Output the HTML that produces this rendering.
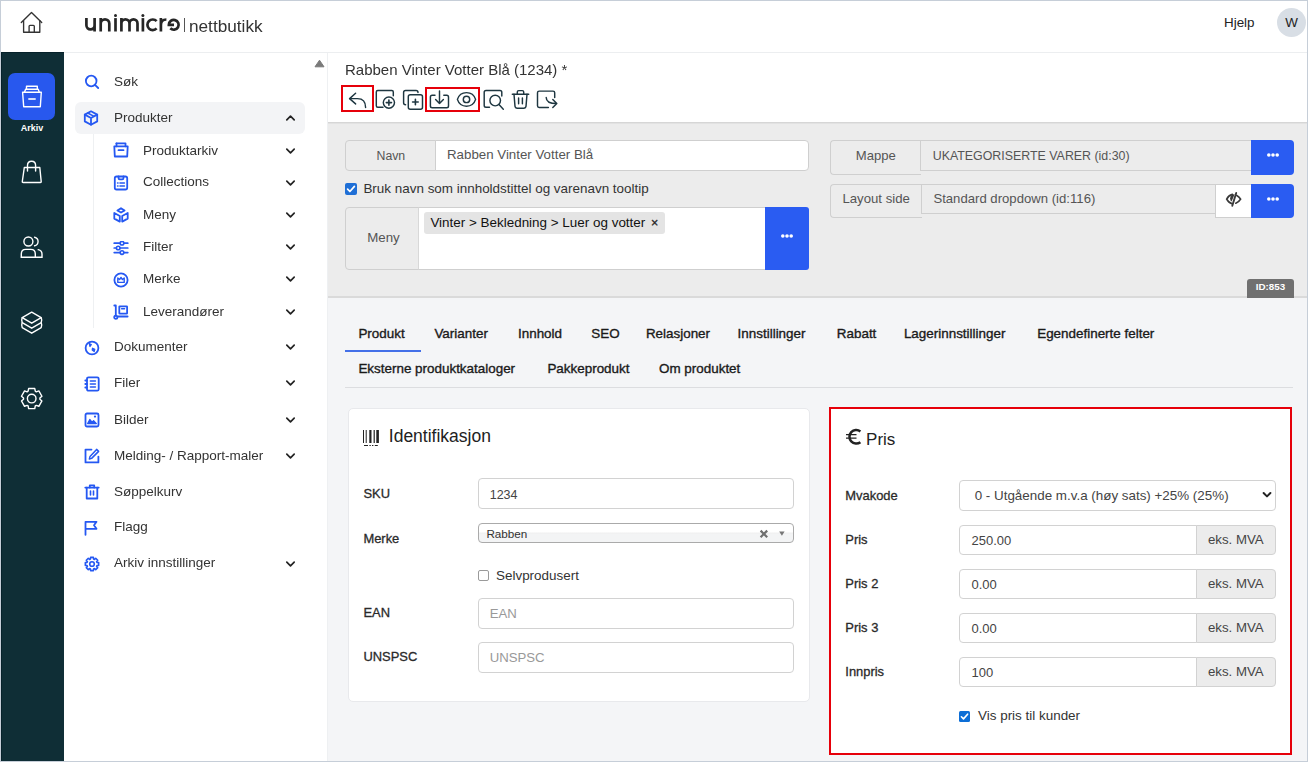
<!DOCTYPE html>
<html><head><meta charset="utf-8">
<style>
*{box-sizing:border-box;margin:0;padding:0}
html,body{width:1308px;height:762px;overflow:hidden;background:#fff}
body{font-family:"Liberation Sans",sans-serif;position:relative;color:#333}
.a{position:absolute}
#frame{position:absolute;left:0;top:0;width:1308px;height:762px;border:1px solid #c6ced8;pointer-events:none;z-index:50}
#hdr{left:1px;top:1px;width:1306px;height:52px;background:#fff;border-bottom:1px solid #eceef0}
#side{left:1px;top:52px;width:63px;height:709px;background:#0f2e36;border-top:1px solid #06212a;border-left:1px solid #06212a}
#nav{left:64px;top:53px;width:264px;height:708px;background:#fff;border-right:1px solid #eef0f2}
#main{left:328px;top:53px;width:979px;height:708px;background:#f4f5f7}
#tb{left:0;top:0;width:979px;height:69px;background:#fff}
#band{left:0;top:70px;width:979px;height:175px;background:#ededed;border-top:1px solid #dedede;border-bottom:1px solid #dcdcdc}
.nv{position:absolute;left:0;width:250px;font-size:13.3px;color:#333}
.nv .t{position:absolute;white-space:nowrap}
.chev{position:absolute;left:222px;width:9px;height:9px}
svg{display:block}
.nt{font-size:13.5px;line-height:16px;color:#333;will-change:transform;white-space:nowrap}
</style></head><body>
<div id="frame"></div>

<!-- header -->
<div id="hdr" class="a">
</div>
<svg class="a" style="left:20px;top:11px" width="24" height="24" viewBox="0 0 24 24" fill="none" stroke="#333" stroke-width="1.35" stroke-linejoin="round" stroke-linecap="round">
  <path d="M1.3 11.6 L11.5 1.4 L21.7 11.6"/>
  <path d="M3.6 9.6 V21.2 H19.8 V9.6"/>
  <path d="M9.1 21.2 V15.2 Q9.1 14.3 10 14.3 H13.4 Q14.3 14.3 14.3 15.2 V21.2"/>
</svg>
<svg class="a" style="left:0;top:0" width="200" height="40" viewBox="0 0 200 40" fill="none" stroke="#262626" stroke-width="2.7">
  <path d="M86.4 18.1 V25.3 A4.1 4.1 0 0 0 94.6 25.3 M94.6 18.1 V31.5"/>
  <path d="M100.7 31.5 V18.1 M100.7 23.6 A4.3 4.3 0 0 1 109.3 23.6 V31.5"/>
  <path d="M115.5 18.1 V31.5"/><circle cx="115.5" cy="15.6" r="1.5" fill="#262626" stroke="none"/>
  <path d="M121.4 31.5 V18.1 M121.4 23.4 A4.05 4.05 0 0 1 129.5 23.4 V31.5 M129.5 23.4 A4 4 0 0 1 137.5 23.4 V31.5"/>
  <path d="M142.9 18.1 V31.5"/><circle cx="142.9" cy="15.6" r="1.5" fill="#262626" stroke="none"/>
  <path d="M156.6 21.2 A5.3 5.3 0 1 0 156.6 28.4"/>
  <path d="M160.9 31.5 V18.1 M160.9 25 Q160.9 19.5 166.4 19.5"/>
  <path d="M174 24.8 H168.85 A4.9 4.9 0 1 1 170.3 28.3"/>
</svg>
<div class="a" style="left:184px;top:18px;width:1px;height:14px;background:#555"></div>
<div class="a" style="left:189px;top:13px;font-size:17.2px;line-height:26px;color:#333;will-change:transform">nettbutikk</div>
<div class="a" style="left:1224px;top:15px;font-size:13.4px;line-height:16px;color:#222">Hjelp</div>
<div class="a" style="left:1277px;top:8px;width:29px;height:29px;border-radius:50%;background:#d8dee5;text-align:center;font-size:13.4px;line-height:29px;color:#222">W</div>

<!-- dark sidebar -->
<div id="side" class="a">
</div>
<div class="a" style="left:8px;top:73px;width:47px;height:47px;border-radius:7px;background:#2858ee"></div>
<svg class="a" style="left:20px;top:84px" width="24" height="24" viewBox="0 0 24 24" fill="none" stroke="#fff" stroke-width="1.4" stroke-linejoin="round">
  <path d="M6.5 5.3 V2.3 H17.3 V5.3"/>
  <path d="M4.5 8.2 L5.6 5.3 H18.2 L19.3 8.2"/>
  <path d="M2.6 8.2 H21.3 L20.3 22.8 H3.7 Z"/>
  <path d="M8.3 15 H15.7" stroke-width="1.6"/>
</svg>
<div class="a" style="left:19px;top:122px;width:26px;text-align:center;font-size:9px;font-weight:bold;line-height:12px;color:#fff">Arkiv</div>
<svg class="a" style="left:20px;top:158px" width="24" height="26" viewBox="0 0 24 26" fill="none" stroke="#fff" stroke-width="1.4" stroke-linejoin="round" stroke-linecap="round">
  <path d="M4.3 9.5 H19.8 L21.2 23.5 Q21.3 24.5 20.3 24.5 H3.2 Q2.2 24.5 2.3 23.5 Z"/>
  <path d="M7.5 13 V7.5 Q7.5 3.2 11.6 3.2 Q15.6 3.2 15.6 7.5 V13"/>
</svg>
<svg class="a" style="left:20px;top:234px" width="24" height="26" viewBox="0 0 24 26" fill="none" stroke="#fff" stroke-width="1.4" stroke-linecap="round">
  <circle cx="8.4" cy="7.5" r="4.5"/>
  <path d="M14.6 3.2 A4.4 4.4 0 0 1 14.6 11.8"/>
  <path d="M1.3 23.2 V20 Q1.3 15.4 5.8 15.4 H10.8 Q15.3 15.4 15.3 20 V23.2 H22 V20 Q22 16.6 18.2 15.6"/>
  <path d="M1.3 23.2 H15.3"/>
</svg>
<svg class="a" style="left:20px;top:310px" width="24" height="26" viewBox="0 0 24 26" fill="none" stroke="#fff" stroke-width="1.4" stroke-linejoin="round">
  <path d="M2.2 7.6 L11.7 2.2 L21.2 7.6 L11.7 13.2 Z"/>
  <path d="M2.2 7.6 Q1.2 10.2 2.2 12.6 L11.7 18.2 L21.2 12.6 Q22.2 10.2 21.2 7.6"/>
  <path d="M2.2 12.6 Q1.2 15.2 2.2 17.6 L11.7 23.2 L21.2 17.6 Q22.2 15.2 21.2 12.6"/>
</svg>
<svg class="a" style="left:20px;top:387px" width="24" height="24" viewBox="0 0 24 24" fill="none" stroke="#fff" stroke-width="1.4" stroke-linejoin="round">
  <path d="M8.11 4.23 L8.63 1.56 L14.77 1.56 L15.29 4.23 L16.29 4.80 L18.86 3.92 L21.93 9.24 L19.88 11.03 L19.88 12.17 L21.93 13.96 L18.86 19.28 L16.29 18.40 L15.29 18.97 L14.77 21.64 L8.63 21.64 L8.11 18.97 L7.11 18.40 L4.54 19.28 L1.47 13.96 L3.52 12.17 L3.52 11.03 L1.47 9.24 L4.54 3.92 L7.11 4.80 Z"/>
  <circle cx="11.7" cy="11.6" r="4.3"/>
</svg>

<!-- nav -->
<div id="nav" class="a">
</div>
<div class="a" style="left:75px;top:102px;width:230px;height:32px;border-radius:6px;background:#f3f4f6"></div>
<div class="a" style="left:93px;top:134px;width:1px;height:194px;background:#eef0f2"></div>
<svg class="a" style="left:314px;top:59px" width="11" height="9" viewBox="0 0 11 9"><path d="M1 7.8 L5.5 1.2 L10 7.8 Z" fill="#7a7a7a" stroke="#7a7a7a" stroke-width="1" stroke-linejoin="round"/></svg>
<svg class="a" style="left:84px;top:74px" width="16" height="16" viewBox="0 0 16 16" fill="none" stroke="#2558f2" stroke-width="1.8" stroke-linecap="round" stroke-linejoin="round"><circle cx="7.2" cy="7" r="5.3"/><path d="M11 10.8 L14.2 14"/></svg>
<div class="a nt" style="left:113.8px;top:74.0px">Søk</div>
<svg class="a" style="left:83px;top:110px" width="16" height="16" viewBox="0 0 16 16" fill="none" stroke="#2558f2" stroke-width="1.8" stroke-linecap="round" stroke-linejoin="round"><path d="M8 1.3 L14.2 4.6 V11.4 L8 14.7 L1.8 11.4 V4.6 Z"/><path d="M1.8 4.6 L8 8 L14.2 4.6 M8 8 V14.7"/><path d="M4.8 3 L11 6.3" stroke-width="1.5"/></svg>
<div class="a nt" style="left:113.8px;top:109.7px">Produkter</div>
<svg class="a" style="left:285px;top:114px" width="11" height="8" viewBox="0 0 11 8" fill="none" stroke="#222" stroke-width="1.7" stroke-linecap="round" stroke-linejoin="round"><path d="M1.8 5.8 L5.5 2.2 L9.2 5.8"/></svg>
<svg class="a" style="left:84px;top:340px" width="16" height="16" viewBox="0 0 16 16" fill="none" stroke="#2558f2" stroke-width="1.8" stroke-linecap="round" stroke-linejoin="round"><circle cx="8" cy="8" r="6.4"/><path d="M5.2 3.6 L7.3 4.6 L6 6.5 Z M8.5 8.2 L10.8 9.4 L10.2 11.6 L8.2 10 Z" fill="#2558f2" stroke-width="1.2"/></svg>
<div class="a nt" style="left:113.8px;top:339.0px">Dokumenter</div>
<svg class="a" style="left:285px;top:343px" width="11" height="8" viewBox="0 0 11 8" fill="none" stroke="#222" stroke-width="1.7" stroke-linecap="round" stroke-linejoin="round"><path d="M1.8 2.2 L5.5 5.8 L9.2 2.2"/></svg>
<svg class="a" style="left:84px;top:376px" width="16" height="16" viewBox="0 0 16 16" fill="none" stroke="#2558f2" stroke-width="1.8" stroke-linecap="round" stroke-linejoin="round"><rect x="3" y="1.3" width="11.7" height="13.4" rx="1.5"/><path d="M1.3 4.5 H3 M1.3 8 H3 M1.3 11.5 H3"/><path d="M6.4 5 H11.4 M6.4 8 H11.4 M6.4 11 H11.4" stroke-width="1.6"/></svg>
<div class="a nt" style="left:113.8px;top:375.1px">Filer</div>
<svg class="a" style="left:285px;top:379px" width="11" height="8" viewBox="0 0 11 8" fill="none" stroke="#222" stroke-width="1.7" stroke-linecap="round" stroke-linejoin="round"><path d="M1.8 2.2 L5.5 5.8 L9.2 2.2"/></svg>
<svg class="a" style="left:84px;top:412px" width="16" height="16" viewBox="0 0 16 16" fill="none" stroke="#2558f2" stroke-width="1.8" stroke-linecap="round" stroke-linejoin="round"><rect x="1.5" y="1.5" width="13" height="13" rx="1.5"/><path d="M3.6 11.6 L5.8 7.5 L8 10.2 L9.6 8.6 L12.4 11.6 Z" fill="#2558f2" stroke-width="1.2"/><circle cx="11" cy="4.6" r="1.1" fill="#2558f2" stroke="none"/></svg>
<div class="a nt" style="left:113.8px;top:411.5px">Bilder</div>
<svg class="a" style="left:285px;top:416px" width="11" height="8" viewBox="0 0 11 8" fill="none" stroke="#222" stroke-width="1.7" stroke-linecap="round" stroke-linejoin="round"><path d="M1.8 2.2 L5.5 5.8 L9.2 2.2"/></svg>
<svg class="a" style="left:84px;top:448px" width="16" height="16" viewBox="0 0 16 16" fill="none" stroke="#2558f2" stroke-width="1.8" stroke-linecap="round" stroke-linejoin="round"><path d="M7.5 1.6 H1.5 V14.4 H14.4 V8.6"/><path d="M12.6 1.4 L14.6 3.4 L7.6 10.4 L5.4 11 L6 8.6 Z" stroke-width="1.5"/></svg>
<div class="a nt" style="left:113.8px;top:447.7px">Melding- / Rapport-maler</div>
<svg class="a" style="left:285px;top:452px" width="11" height="8" viewBox="0 0 11 8" fill="none" stroke="#222" stroke-width="1.7" stroke-linecap="round" stroke-linejoin="round"><path d="M1.8 2.2 L5.5 5.8 L9.2 2.2"/></svg>
<svg class="a" style="left:84px;top:484px" width="16" height="16" viewBox="0 0 16 16" fill="none" stroke="#2558f2" stroke-width="1.8" stroke-linecap="round" stroke-linejoin="round"><path d="M1.3 3.6 H14.7"/><path d="M5.8 3.6 V1.3 H10.2 V3.6"/><path d="M2.7 3.6 V14.5 H13.3 V3.6"/><path d="M6.5 7 V11 M9.5 7 V11" stroke-width="1.6"/></svg>
<div class="a nt" style="left:113.8px;top:483.7px">Søppelkurv</div>
<svg class="a" style="left:84px;top:520px" width="16" height="16" viewBox="0 0 16 16" fill="none" stroke="#2558f2" stroke-width="1.8" stroke-linecap="round" stroke-linejoin="round"><path d="M1.5 14.8 V1.8 H12.5 L10 5.3 L12.5 8.8 H1.5"/></svg>
<div class="a nt" style="left:113.8px;top:519.3px">Flagg</div>
<svg class="a" style="left:84px;top:556px" width="16" height="16" viewBox="0 0 16 16" fill="none" stroke="#2558f2" stroke-width="1.8" stroke-linecap="round" stroke-linejoin="round"><path d="M12.96 6.44 L14.65 6.59 L14.65 9.41 L12.96 9.56 L12.61 10.40 L13.70 11.70 L11.70 13.70 L10.40 12.61 L9.56 12.96 L9.41 14.65 L6.59 14.65 L6.44 12.96 L5.60 12.61 L4.30 13.70 L2.30 11.70 L3.39 10.40 L3.04 9.56 L1.35 9.41 L1.35 6.59 L3.04 6.44 L3.39 5.60 L2.30 4.30 L4.30 2.30 L5.60 3.39 L6.44 3.04 L6.59 1.35 L9.41 1.35 L9.56 3.04 L10.40 3.39 L11.70 2.30 L13.70 4.30 L12.61 5.60 Z" stroke-width="1.6"/><circle cx="8" cy="8" r="2.3" stroke-width="1.6"/></svg>
<div class="a nt" style="left:113.8px;top:555.3px">Arkiv innstillinger</div>
<svg class="a" style="left:285px;top:560px" width="11" height="8" viewBox="0 0 11 8" fill="none" stroke="#222" stroke-width="1.7" stroke-linecap="round" stroke-linejoin="round"><path d="M1.8 2.2 L5.5 5.8 L9.2 2.2"/></svg>
<svg class="a" style="left:113px;top:142px" width="16" height="16" viewBox="0 0 16 16" fill="none" stroke="#2558f2" stroke-width="1.8" stroke-linecap="round" stroke-linejoin="round"><path d="M3.5 1.3 H12.5 V4.3"/><path d="M3.5 1.3 V4.3"/><path d="M1.3 4.3 H14.7 L14.2 14.5 H1.8 Z"/><path d="M5.5 8.2 H10.5"/></svg>
<div class="a nt" style="left:142.6px;top:142.5px">Produktarkiv</div>
<svg class="a" style="left:285px;top:147px" width="11" height="8" viewBox="0 0 11 8" fill="none" stroke="#222" stroke-width="1.7" stroke-linecap="round" stroke-linejoin="round"><path d="M1.8 2.2 L5.5 5.8 L9.2 2.2"/></svg>
<svg class="a" style="left:113px;top:175px" width="16" height="16" viewBox="0 0 16 16" fill="none" stroke="#2558f2" stroke-width="1.8" stroke-linecap="round" stroke-linejoin="round"><rect x="1.8" y="1.5" width="12.4" height="13" rx="1.8"/><path d="M5.5 1.5 V3 Q5.5 4.3 6.8 4.3 H9.2 Q10.5 4.3 10.5 3 V1.5"/><path d="M4.6 8 H5 M7 8 H11.4 M4.6 11 H5 M7 11 H11.4" stroke-width="1.6"/></svg>
<div class="a nt" style="left:142.6px;top:174.4px">Collections</div>
<svg class="a" style="left:285px;top:179px" width="11" height="8" viewBox="0 0 11 8" fill="none" stroke="#222" stroke-width="1.7" stroke-linecap="round" stroke-linejoin="round"><path d="M1.8 2.2 L5.5 5.8 L9.2 2.2"/></svg>
<svg class="a" style="left:113px;top:207px" width="16" height="16" viewBox="0 0 16 16" fill="none" stroke="#2558f2" stroke-width="1.8" stroke-linecap="round" stroke-linejoin="round"><path d="M8 1.2 L11.6 3.4 L8 5.6 L4.4 3.4 Z"/><path d="M1.3 6 L6.8 9 V14.6 L1.3 11.6 Z"/><path d="M14.7 6 L9.2 9 V14.6 L14.7 11.6 Z"/></svg>
<div class="a nt" style="left:142.6px;top:206.6px">Meny</div>
<svg class="a" style="left:285px;top:211px" width="11" height="8" viewBox="0 0 11 8" fill="none" stroke="#222" stroke-width="1.7" stroke-linecap="round" stroke-linejoin="round"><path d="M1.8 2.2 L5.5 5.8 L9.2 2.2"/></svg>
<svg class="a" style="left:113px;top:241px" width="16" height="16" viewBox="0 0 16 16" fill="none" stroke="#2558f2" stroke-width="1.8" stroke-linecap="round" stroke-linejoin="round"><path d="M1.2 2.2 H7 M11 2.2 H14.8 M1.2 7 H3.2 M7.2 7 H14.8 M1.2 11.6 H7 M11 11.6 H14.8" stroke-width="1.7"/><circle cx="9" cy="2.2" r="1.8" stroke-width="1.6"/><circle cx="5.2" cy="7" r="1.8" stroke-width="1.6"/><circle cx="9" cy="11.6" r="1.8" stroke-width="1.6"/></svg>
<div class="a nt" style="left:142.6px;top:239.0px">Filter</div>
<svg class="a" style="left:285px;top:243px" width="11" height="8" viewBox="0 0 11 8" fill="none" stroke="#222" stroke-width="1.7" stroke-linecap="round" stroke-linejoin="round"><path d="M1.8 2.2 L5.5 5.8 L9.2 2.2"/></svg>
<svg class="a" style="left:113px;top:272px" width="16" height="16" viewBox="0 0 16 16" fill="none" stroke="#2558f2" stroke-width="1.8" stroke-linecap="round" stroke-linejoin="round"><circle cx="8" cy="8" r="6.6"/><path d="M4.8 10.4 V6 L6.6 7.6 L8 5.4 L9.4 7.6 L11.2 6 V10.4 Z" stroke-width="1.4"/></svg>
<div class="a nt" style="left:142.6px;top:271.2px">Merke</div>
<svg class="a" style="left:285px;top:275px" width="11" height="8" viewBox="0 0 11 8" fill="none" stroke="#222" stroke-width="1.7" stroke-linecap="round" stroke-linejoin="round"><path d="M1.8 2.2 L5.5 5.8 L9.2 2.2"/></svg>
<svg class="a" style="left:113px;top:304px" width="16" height="16" viewBox="0 0 16 16" fill="none" stroke="#2558f2" stroke-width="1.8" stroke-linecap="round" stroke-linejoin="round"><path d="M1.3 1.5 H2.8 V11.8"/><path d="M5 12.5 H14.6"/><circle cx="2.8" cy="13.2" r="1.6"/><rect x="6.3" y="2.3" width="7.8" height="7.4" rx="0.5"/><path d="M8.6 4.8 H11.6" stroke-width="1.4"/></svg>
<div class="a nt" style="left:142.6px;top:303.5px">Leverandører</div>
<svg class="a" style="left:285px;top:308px" width="11" height="8" viewBox="0 0 11 8" fill="none" stroke="#222" stroke-width="1.7" stroke-linecap="round" stroke-linejoin="round"><path d="M1.8 2.2 L5.5 5.8 L9.2 2.2"/></svg>
<!-- /nav -->
<!-- main -->
<div id="main" class="a">
  <div id="tb" class="a"></div>
</div>
<!-- toolbar -->
<div class="a" style="left:345px;top:61px;font-size:15px;line-height:18px;color:#333;white-space:nowrap;will-change:transform">Rabben Vinter Votter Blå (1234) *</div>
<div class="a" style="left:341px;top:85px;width:33px;height:27px;border:2px solid #e6000a"></div>
<div class="a" style="left:425px;top:87px;width:55px;height:25px;border:2px solid #e6000a"></div>
<svg class="a" style="left:346px;top:90px" width="24" height="20" viewBox="346 90 24 20" fill="none" stroke="#1e3640" stroke-width="1.45" stroke-linecap="round" stroke-linejoin="round"><path d="M355.6 93.3 L349.6 98.6 L355.6 103.9"/><path d="M349.6 98.6 H357.5 Q365.6 98.6 365.6 107.5"/></svg>
<svg class="a" style="left:374px;top:88px" width="24" height="24" viewBox="374 88 24 24" fill="none" stroke="#1e3640" stroke-width="1.45" stroke-linecap="round" stroke-linejoin="round"><path d="M383 107.3 H377.8 Q376.3 107.3 376.3 105.8 V92 Q376.3 90.5 377.8 90.5 H391.8 Q393.3 90.5 393.3 92 V95.8"/><circle cx="388.9" cy="102.6" r="5.6"/><path d="M388.9 100 V105.2 M386.3 102.6 H391.5" stroke-width="1.6"/></svg>
<svg class="a" style="left:401px;top:88px" width="24" height="24" viewBox="401 88 24 24" fill="none" stroke="#1e3640" stroke-width="1.45" stroke-linecap="round" stroke-linejoin="round"><path d="M405.6 104.8 Q403.6 104.8 403.6 102.8 V92.5 Q403.6 90.5 405.6 90.5 H416 Q418 90.5 418 92.5"/><rect x="408.3" y="94.7" width="14.2" height="14.6" rx="2"/><path d="M415.4 99.2 V104.8 M412.6 102 H418.2" stroke-width="1.6"/></svg>
<svg class="a" style="left:428px;top:88px" width="24" height="24" viewBox="428 88 24 24" fill="none" stroke="#1e3640" stroke-width="1.45" stroke-linecap="round" stroke-linejoin="round"><path d="M435 95.2 H432.2 Q430.4 95.2 430.4 97 V106 Q430.4 107.8 432.2 107.8 H446.7 Q448.5 107.8 448.5 106 V97 Q448.5 95.2 446.7 95.2 H443.8"/><path d="M439.5 91 V103.4 M435.6 99.4 L439.5 103.4 L443.4 99.4"/></svg>
<svg class="a" style="left:455px;top:90px" width="24" height="20" viewBox="455 90 24 20" fill="none" stroke="#1e3640" stroke-width="1.45" stroke-linecap="round" stroke-linejoin="round"><path d="M457.4 99.4 C458.8 95 462.4 92.6 466.5 92.6 C470.6 92.6 474.2 95 475.6 99.4 C474.2 103.8 470.6 106.2 466.5 106.2 C462.4 106.2 458.8 103.8 457.4 99.4 Z"/><circle cx="466.5" cy="99.4" r="3.2"/></svg>
<svg class="a" style="left:482px;top:88px" width="24" height="24" viewBox="482 88 24 24" fill="none" stroke="#1e3640" stroke-width="1.45" stroke-linecap="round" stroke-linejoin="round"><path d="M489.5 107.3 H486 Q484.2 107.3 484.2 105.5 V92.3 Q484.2 90.5 486 90.5 H500 Q501.8 90.5 501.8 92.3 V96"/><circle cx="495.2" cy="100.6" r="5.3"/><path d="M499 104.6 L503.3 109.2"/></svg>
<svg class="a" style="left:510px;top:88px" width="22" height="24" viewBox="510 88 22 24" fill="none" stroke="#1e3640" stroke-width="1.45" stroke-linecap="round" stroke-linejoin="round"><path d="M512.3 94.2 H528.7"/><path d="M517.3 94.2 V92 Q517.3 90.6 518.7 90.6 H522.3 Q523.7 90.6 523.7 92 V94.2"/><path d="M514 94.2 L515 106.4 Q515.2 108.2 517 108.2 H524 Q525.8 108.2 526 106.4 L527 94.2"/><path d="M518.6 98 V103.8 M522.4 98 V103.8"/></svg>
<svg class="a" style="left:535px;top:88px" width="24" height="24" viewBox="535 88 24 24" fill="none" stroke="#1e3640" stroke-width="1.45" stroke-linecap="round" stroke-linejoin="round"><path d="M548.4 107.4 H539.2 Q537.5 107.4 537.5 105.7 V92.8 Q537.5 91.1 539.2 91.1 H553 Q554.7 91.1 554.7 92.8 V97.6"/><path d="M546.2 97.4 Q546.2 103.5 556.7 103.5 M552.8 99.4 L556.8 103.5 L552.8 107.6"/></svg>
<!-- /toolbar -->
<!-- band -->
<div class="a" style="left:328px;top:122px;width:979px;height:176px;background:#ececec;border-top:1px solid #d6d6d6;border-bottom:2px solid #dadada;box-shadow:inset 0 1px 0 #e2e2e2"></div>
<div class="a" style="left:345px;top:140px;width:91px;height:31px;background:#ececec;border:1px solid #cfcfcf;border-radius:4px 0 0 4px"></div>
<div class="a" style="left:435px;top:140px;width:374px;height:31px;background:#fff;border:1px solid #cfcfcf;border-radius:0 4px 4px 0"></div>
<div class="a" style="left:376.5px;top:147.7px;font-size:12.3px;line-height:16px;color:#555;white-space:nowrap;">Navn</div>
<div class="a" style="left:447px;top:147.4px;font-size:13.3px;line-height:16px;color:#555;white-space:nowrap;">Rabben Vinter Votter Blå</div>
<div class="a" style="left:345px;top:183px;width:12px;height:12px;background:#1f6fd6;border-radius:2px"></div>
<svg class="a" style="left:345px;top:183px" width="12" height="12" viewBox="0 0 12 12" fill="none" stroke="#fff" stroke-width="1.7" stroke-linecap="round" stroke-linejoin="round"><path d="M2.6 6.2 L4.9 8.5 L9.4 3.4"/></svg>
<div class="a" style="left:363.4px;top:180.5px;font-size:13.45px;line-height:16px;color:#333;white-space:nowrap;">Bruk navn som innholdstittel og varenavn tooltip</div>
<div class="a" style="left:345px;top:207px;width:74px;height:63px;background:#ececec;border:1px solid #cfcfcf;border-radius:4px 0 0 4px"></div>
<div class="a" style="left:418px;top:207px;width:348px;height:63px;background:#fff;border:1px solid #cfcfcf;border-left:1px solid #d8d8d8"></div>
<div class="a" style="left:765px;top:207px;width:44px;height:63px;background:#2a5cf2;border-radius:0 3px 3px 0"></div>
<svg class="a" style="left:779px;top:233px" width="16" height="6" viewBox="0 0 16 6" fill="#fff"><circle cx="3.8" cy="3" r="1.8"/><circle cx="8" cy="3" r="1.8"/><circle cx="12.2" cy="3" r="1.8"/></svg>
<div class="a" style="left:367.2px;top:230.2px;font-size:13.3px;line-height:16px;color:#555;white-space:nowrap;">Meny</div>
<div class="a" style="left:424px;top:212px;width:241px;height:22px;background:#e4e4e4;border-radius:3px"></div>
<div class="a" style="left:430.4px;top:214.8px;font-size:13.45px;line-height:16px;color:#111;white-space:nowrap;">Vinter &gt; Bekledning &gt; Luer og votter</div>
<div class="a" style="left:651px;top:214.7px;font-size:12.5px;line-height:16px;color:#222;white-space:nowrap;-webkit-text-stroke:0.3px #222;">×</div>
<div class="a" style="left:830px;top:140px;width:91px;height:35px;background:#ececec;border:1px solid #cfcfcf;border-right:none;border-radius:4px 0 0 4px"></div>
<div class="a" style="left:920px;top:140px;width:332px;height:31px;background:#ececec;border:1px solid #cfcfcf;border-right:none"></div>
<div class="a" style="left:1251px;top:140px;width:43px;height:35px;background:#2a5cf2;border-radius:0 4px 4px 0"></div>
<svg class="a" style="left:1265px;top:152px" width="16" height="6" viewBox="0 0 16 6" fill="#fff"><circle cx="3.8" cy="3" r="1.8"/><circle cx="8" cy="3" r="1.8"/><circle cx="12.2" cy="3" r="1.8"/></svg>
<div class="a" style="left:855.8px;top:147.9px;font-size:13.1px;line-height:16px;color:#555;white-space:nowrap;">Mappe</div>
<div class="a" style="left:932.7px;top:148.1px;font-size:12.4px;line-height:16px;color:#555;white-space:nowrap;">UKATEGORISERTE VARER (id:30)</div>
<div class="a" style="left:830px;top:184px;width:92px;height:34px;background:#ececec;border:1px solid #cfcfcf;border-right:none;border-radius:4px 0 0 4px"></div>
<div class="a" style="left:921px;top:184px;width:295px;height:30px;background:#ececec;border:1px solid #cfcfcf"></div>
<div class="a" style="left:1215px;top:184px;width:37px;height:34px;background:#fff;border:1px solid #cfcfcf;border-right:none"></div>
<div class="a" style="left:1251px;top:184px;width:43px;height:34px;background:#2a5cf2;border-radius:0 4px 4px 0"></div>
<svg class="a" style="left:1265px;top:196px" width="16" height="6" viewBox="0 0 16 6" fill="#fff"><circle cx="3.8" cy="3" r="1.8"/><circle cx="8" cy="3" r="1.8"/><circle cx="12.2" cy="3" r="1.8"/></svg>
<div class="a" style="left:842.4px;top:191.4px;font-size:13.2px;line-height:16px;color:#555;white-space:nowrap;">Layout side</div>
<div class="a" style="left:933.4px;top:191.4px;font-size:13.15px;line-height:16px;color:#555;white-space:nowrap;">Standard dropdown (id:116)</div>
<svg class="a" style="left:1225px;top:191px" width="17" height="17" viewBox="0 0 17 17" fill="none" stroke="#3a3a3a" stroke-width="1.7" stroke-linecap="round"><path d="M7.4 3.4 Q3.6 4.4 1.7 8.2 Q3.6 11.8 6.8 12.6"/><path d="M9.6 3.2 Q5.6 3.2 5.1 7.4 Q5.2 9.6 6.6 10.6 Z" fill="#3a3a3a" stroke="none"/><path d="M11.2 1.9 L7.3 14.8" stroke-width="1.9"/><path d="M11.8 4.4 Q14.2 5.6 15.6 8.2 Q14.2 10.8 10.8 12.2"/></svg>
<div class="a" style="left:1247px;top:279px;width:47px;height:19px;background:#707070;border-radius:3px 3px 0 0;color:#fff;font-size:9.8px;font-weight:bold;line-height:16px;text-align:center;padding-top:0px">ID:853</div>
<!-- /band -->
<!-- body -->
<div class="a" style="left:358.4px;top:325.5px;font-size:13.4375px;font-weight:normal;line-height:16px;color:#1a1a1a;white-space:nowrap;-webkit-text-stroke:0.35px #1a1a1a;">Produkt</div>
<div class="a" style="left:434.4px;top:325.5px;font-size:13.4375px;font-weight:normal;line-height:16px;color:#1a1a1a;white-space:nowrap;-webkit-text-stroke:0.35px #1a1a1a;">Varianter</div>
<div class="a" style="left:518px;top:325.5px;font-size:13.4375px;font-weight:normal;line-height:16px;color:#1a1a1a;white-space:nowrap;-webkit-text-stroke:0.35px #1a1a1a;">Innhold</div>
<div class="a" style="left:591.3px;top:325.5px;font-size:13.4375px;font-weight:normal;line-height:16px;color:#1a1a1a;white-space:nowrap;-webkit-text-stroke:0.35px #1a1a1a;">SEO</div>
<div class="a" style="left:645.9px;top:325.5px;font-size:13.4375px;font-weight:normal;line-height:16px;color:#1a1a1a;white-space:nowrap;-webkit-text-stroke:0.35px #1a1a1a;">Relasjoner</div>
<div class="a" style="left:737.6px;top:325.5px;font-size:13.4375px;font-weight:normal;line-height:16px;color:#1a1a1a;white-space:nowrap;-webkit-text-stroke:0.35px #1a1a1a;">Innstillinger</div>
<div class="a" style="left:836.8px;top:325.5px;font-size:13.4375px;font-weight:normal;line-height:16px;color:#1a1a1a;white-space:nowrap;-webkit-text-stroke:0.35px #1a1a1a;">Rabatt</div>
<div class="a" style="left:903.9px;top:325.5px;font-size:13.4375px;font-weight:normal;line-height:16px;color:#1a1a1a;white-space:nowrap;-webkit-text-stroke:0.35px #1a1a1a;">Lagerinnstillinger</div>
<div class="a" style="left:1037.2px;top:325.5px;font-size:13.4375px;font-weight:normal;line-height:16px;color:#1a1a1a;white-space:nowrap;-webkit-text-stroke:0.35px #1a1a1a;">Egendefinerte felter</div>
<div class="a" style="left:358.4px;top:360.8px;font-size:13.4375px;font-weight:normal;line-height:16px;color:#1a1a1a;white-space:nowrap;-webkit-text-stroke:0.35px #1a1a1a;">Eksterne produktkataloger</div>
<div class="a" style="left:547.4px;top:360.8px;font-size:13.4375px;font-weight:normal;line-height:16px;color:#1a1a1a;white-space:nowrap;-webkit-text-stroke:0.35px #1a1a1a;">Pakkeprodukt</div>
<div class="a" style="left:659px;top:360.8px;font-size:13.4375px;font-weight:normal;line-height:16px;color:#1a1a1a;white-space:nowrap;-webkit-text-stroke:0.35px #1a1a1a;">Om produktet</div>
<div class="a" style="left:345px;top:350px;width:76px;height:2px;background:#4470e8"></div>
<div class="a" style="left:345px;top:387px;width:948px;height:1px;background:#dcdde0"></div>
<div class="a" style="left:348px;top:408px;width:462px;height:294px;background:#fff;border:1px solid #e8e9ec;border-radius:5px"></div>
<svg class="a" style="left:362px;top:429px" width="18" height="18" viewBox="0 0 18 18" fill="#222"><rect x="1" y="1" width="1" height="13"/><rect x="3.7" y="1" width="1" height="13"/><rect x="7.3" y="1" width="2.2" height="13"/><rect x="11.6" y="1" width="1.2" height="13"/><rect x="14.3" y="1" width="2.6" height="13"/><rect x="2" y="16" width="4" height="1"/><rect x="7.4" y="16" width="1.4" height="1"/><rect x="10" y="16" width="1.4" height="1"/><rect x="12.8" y="16" width="3" height="1"/></svg>
<div class="a" style="left:388.8px;top:428.1px;font-size:17.5px;font-weight:normal;line-height:16px;color:#222;white-space:nowrap;">Identifikasjon</div>
<div class="a" style="left:363.4px;top:486.4px;font-size:12.937499999999998px;font-weight:normal;line-height:16px;color:#2a2a2a;white-space:nowrap;-webkit-text-stroke:0.3px #2a2a2a;">SKU</div>
<div class="a" style="left:478px;top:478px;width:316px;height:31px;background:#fff;border:1px solid #d2d2d2;border-radius:4px;"></div>
<div class="a" style="left:489.7px;top:486.5px;font-size:12.5px;font-weight:normal;line-height:16px;color:#444;white-space:nowrap;">1234</div>
<div class="a" style="left:363.4px;top:530.5px;font-size:12.937499999999998px;font-weight:normal;line-height:16px;color:#2a2a2a;white-space:nowrap;-webkit-text-stroke:0.3px #2a2a2a;">Merke</div>
<div class="a" style="left:478px;top:523px;width:316px;height:20px;background:linear-gradient(#fff 0%,#fff 45%,#eeeeee 50%,#f3f4f5 55%,#f3f4f5 100%);border:1px solid #aaaaaa;border-radius:4px;"></div>
<div class="a" style="left:486.4px;top:526.3px;font-size:11.7px;font-weight:normal;line-height:16px;color:#333;white-space:nowrap;">Rabben</div>
<svg class="a" style="left:758px;top:528px" width="30" height="12" viewBox="0 0 30 12"><path d="M2.6 2.6 L9.2 9.2 M9.2 2.6 L2.6 9.2" stroke="#6f6f6f" stroke-width="2.2"/><path d="M21.2 3.4 H26.6 L23.9 7.8 Z" fill="#777"/></svg>
<div class="a" style="left:478px;top:570px;width:11px;height:11px;border:1px solid #9a9a9a;border-radius:2px;background:#fff"></div>
<div class="a" style="left:496px;top:568.0px;font-size:13.45px;font-weight:normal;line-height:16px;color:#333;white-space:nowrap;">Selvprodusert</div>
<div class="a" style="left:363.4px;top:605.1px;font-size:12.937499999999998px;font-weight:normal;line-height:16px;color:#2a2a2a;white-space:nowrap;-webkit-text-stroke:0.3px #2a2a2a;">EAN</div>
<div class="a" style="left:478px;top:598px;width:316px;height:31px;background:#fff;border:1px solid #d2d2d2;border-radius:4px;"></div>
<div class="a" style="left:489.7px;top:605.9px;font-size:13.2px;font-weight:normal;line-height:16px;color:#999;white-space:nowrap;">EAN</div>
<div class="a" style="left:363.4px;top:649.2px;font-size:12.937499999999998px;font-weight:normal;line-height:16px;color:#2a2a2a;white-space:nowrap;-webkit-text-stroke:0.3px #2a2a2a;">UNSPSC</div>
<div class="a" style="left:478px;top:642px;width:316px;height:31px;background:#fff;border:1px solid #d2d2d2;border-radius:4px;"></div>
<div class="a" style="left:489.7px;top:649.9px;font-size:13.2px;font-weight:normal;line-height:16px;color:#999;white-space:nowrap;">UNSPSC</div>
<div class="a" style="left:830px;top:409px;width:461px;height:345px;background:#fff"></div>
<div class="a" style="left:829px;top:407px;width:463px;height:348px;border:2px solid #e6000a"></div>
<svg class="a" style="left:840px;top:425px" width="24" height="24" viewBox="840 425 24 24" fill="none" stroke="#222"><path d="M860.4 431.4 A6.8 6.8 0 1 0 860.4 442.2" stroke-width="2.5"/><path d="M846 434.7 H856.5 M846 438.2 H856.5" stroke-width="1.3"/></svg>
<div class="a" style="left:866.1px;top:431.7px;font-size:17px;font-weight:normal;line-height:16px;color:#222;white-space:nowrap;">Pris</div>
<div class="a" style="left:845.3px;top:488.3px;font-size:12.937499999999998px;font-weight:normal;line-height:16px;color:#2a2a2a;white-space:nowrap;-webkit-text-stroke:0.3px #2a2a2a;">Mvakode</div>
<div class="a" style="left:959px;top:480px;width:317px;height:31px;background:#fff;border:1px solid #d2d2d2;border-radius:4px;"></div>
<div class="a" style="left:974.7px;top:488.3px;font-size:13.4px;font-weight:normal;line-height:16px;color:#444;white-space:nowrap;">0 - Utgående m.v.a (høy sats) +25% (25%)</div>
<svg class="a" style="left:1261px;top:490px" width="12" height="10" viewBox="0 0 12 10" fill="none" stroke="#222" stroke-width="2" stroke-linecap="round" stroke-linejoin="round"><path d="M2.6 3 L6 6.4 L9.4 3"/></svg>
<div class="a" style="left:845.3px;top:532.3px;font-size:12.937499999999998px;font-weight:normal;line-height:16px;color:#2a2a2a;white-space:nowrap;-webkit-text-stroke:0.3px #2a2a2a;">Pris</div>
<div class="a" style="left:959px;top:525px;width:238px;height:30px;background:#fff;border:1px solid #d2d2d2;border-radius:4px 0 0 4px;"></div>
<div class="a" style="left:1196px;top:525px;width:80px;height:30px;background:#ececec;border:1px solid #d2d2d2;border-radius:0 4px 4px 0;"></div>
<div class="a" style="left:971.5px;top:532.9px;font-size:13px;font-weight:normal;line-height:16px;color:#444;white-space:nowrap;">250.00</div>
<div class="a" style="left:1208px;top:531.8px;font-size:13.25px;font-weight:normal;line-height:16px;color:#444;white-space:nowrap;">eks. MVA</div>
<div class="a" style="left:845.3px;top:576.2px;font-size:12.937499999999998px;font-weight:normal;line-height:16px;color:#2a2a2a;white-space:nowrap;-webkit-text-stroke:0.3px #2a2a2a;">Pris 2</div>
<div class="a" style="left:959px;top:569px;width:238px;height:30px;background:#fff;border:1px solid #d2d2d2;border-radius:4px 0 0 4px;"></div>
<div class="a" style="left:1196px;top:569px;width:80px;height:30px;background:#ececec;border:1px solid #d2d2d2;border-radius:0 4px 4px 0;"></div>
<div class="a" style="left:971.5px;top:576.8px;font-size:13px;font-weight:normal;line-height:16px;color:#444;white-space:nowrap;">0.00</div>
<div class="a" style="left:1208px;top:575.7px;font-size:13.25px;font-weight:normal;line-height:16px;color:#444;white-space:nowrap;">eks. MVA</div>
<div class="a" style="left:845.3px;top:620.1px;font-size:12.937499999999998px;font-weight:normal;line-height:16px;color:#2a2a2a;white-space:nowrap;-webkit-text-stroke:0.3px #2a2a2a;">Pris 3</div>
<div class="a" style="left:959px;top:613px;width:238px;height:30px;background:#fff;border:1px solid #d2d2d2;border-radius:4px 0 0 4px;"></div>
<div class="a" style="left:1196px;top:613px;width:80px;height:30px;background:#ececec;border:1px solid #d2d2d2;border-radius:0 4px 4px 0;"></div>
<div class="a" style="left:971.5px;top:620.7px;font-size:13px;font-weight:normal;line-height:16px;color:#444;white-space:nowrap;">0.00</div>
<div class="a" style="left:1208px;top:619.6px;font-size:13.25px;font-weight:normal;line-height:16px;color:#444;white-space:nowrap;">eks. MVA</div>
<div class="a" style="left:845.3px;top:664.1px;font-size:12.937499999999998px;font-weight:normal;line-height:16px;color:#2a2a2a;white-space:nowrap;-webkit-text-stroke:0.3px #2a2a2a;">Innpris</div>
<div class="a" style="left:959px;top:657px;width:238px;height:30px;background:#fff;border:1px solid #d2d2d2;border-radius:4px 0 0 4px;"></div>
<div class="a" style="left:1196px;top:657px;width:80px;height:30px;background:#ececec;border:1px solid #d2d2d2;border-radius:0 4px 4px 0;"></div>
<div class="a" style="left:971.5px;top:664.7px;font-size:13px;font-weight:normal;line-height:16px;color:#444;white-space:nowrap;">100</div>
<div class="a" style="left:1208px;top:663.6px;font-size:13.25px;font-weight:normal;line-height:16px;color:#444;white-space:nowrap;">eks. MVA</div>
<div class="a" style="left:959px;top:711px;width:11px;height:11px;background:#0d6ed6;border-radius:1.5px"></div>
<svg class="a" style="left:959px;top:711px" width="11" height="11" viewBox="0 0 11 11" fill="none" stroke="#fff" stroke-width="1.6" stroke-linecap="round" stroke-linejoin="round"><path d="M2.4 5.8 L4.5 7.9 L8.6 3.2"/></svg>
<div class="a" style="left:978px;top:707.8px;font-size:13.45px;font-weight:normal;line-height:16px;color:#333;white-space:nowrap;">Vis pris til kunder</div>
<!-- /body -->
</body></html>
